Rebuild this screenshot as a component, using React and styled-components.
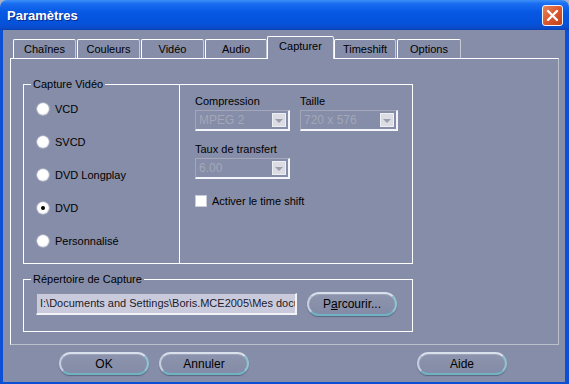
import React from "react";
import styled, { createGlobalStyle } from "styled-components";

const GlobalStyle = createGlobalStyle`
  html, body {
    margin: 0;
    padding: 0;
    background: #a9b1c6;
  }
  body {
    font-family: "Liberation Sans", Arial, sans-serif;
    font-size: 11px;
  }
`;

const BG = "#868da8";

const tabs = [
  { label: "Chaînes", w: 63 },
  { label: "Couleurs", w: 63 },
  { label: "Vidéo", w: 63 },
  { label: "Audio", w: 62 },
  { label: "Capturer", w: 67, active: true },
  { label: "Timeshift", w: 62 },
  { label: "Options", w: 64 },
];

const modes = ["VCD", "SVCD", "DVD Longplay", "DVD", "Personnalisé"];

const App = () => {
  return (
    <Window>
      <GlobalStyle />
      <TitleBar>
        <Title>Paramètres</Title>
        <CloseButton>
          <svg width="13" height="13" viewBox="0 0 13 13">
            <path d="M2 2 L11 11 M11 2 L2 11" stroke="#fff" strokeWidth="2.4" strokeLinecap="round" />
          </svg>
        </CloseButton>
      </TitleBar>
      <Frame>
        <TabRow>
          {tabs.map((t) => (
            <Tab key={t.label} $w={t.w} $active={t.active}>
              {t.label}
            </Tab>
          ))}
        </TabRow>
        <Panel>
          <Group>
            <GroupLabel>Capture Vidéo</GroupLabel>
            <CaptureBody>
              <RadioColumn>
                {modes.map((m) => (
                  <RadioRow key={m}>
                    <Radio $checked={m === "DVD"} />
                    {m}
                  </RadioRow>
                ))}
              </RadioColumn>
              <Settings>
                <FieldRow>
                  <Field $w={95}>
                    <Label>Compression</Label>
                    <Combo>
                      MPEG 2
                      <ComboArrow />
                    </Combo>
                  </Field>
                  <Field $w={98}>
                    <Label>Taille</Label>
                    <Combo>
                      720 x 576
                      <ComboArrow />
                    </Combo>
                  </Field>
                </FieldRow>
                <FieldRow $top={11}>
                  <Field $w={95}>
                    <Label>Taux de transfert</Label>
                    <Combo>
                      6.00
                      <ComboArrow />
                    </Combo>
                  </Field>
                </FieldRow>
                <CheckRow>
                  <CheckBox />
                  Activer le time shift
                </CheckRow>
              </Settings>
            </CaptureBody>
          </Group>
          <Group $top={15}>
            <GroupLabel>Répertoire de Capture</GroupLabel>
            <PathRow>
              <PathField>I:\Documents and Settings\Boris.MCE2005\Mes docu</PathField>
              <PillButton $w={90} $h={24}>
                P<Mnemonic>a</Mnemonic>rcourir...
              </PillButton>
            </PathRow>
          </Group>
        </Panel>
        <ButtonRow>
          <PillButton $w={90}>OK</PillButton>
          <PillButton $w={90}>Annuler</PillButton>
          <Spacer />
          <PillButton $w={90}>Aide</PillButton>
        </ButtonRow>
      </Frame>
    </Window>
  );
};

const Window = styled.div`
  width: 569px;
  height: 384px;
  display: flex;
  flex-direction: column;
  overflow: hidden;
`;

const TitleBar = styled.div`
  height: 30px;
  flex-shrink: 0;
  display: flex;
  align-items: center;
  justify-content: space-between;
  padding: 0 6px 0 7px;
  border-radius: 7px 7px 0 0;
  background: linear-gradient(
    to bottom,
    #3d8ff6 0%,
    #1a6ef0 12%,
    #0758e4 40%,
    #0553dc 75%,
    #0a4ccc 92%,
    #0841b4 100%
  );
`;

const Title = styled.span`
  color: #fff;
  font-weight: bold;
  font-size: 13px;
  text-shadow: 1px 1px 0 #0a2a8a;
  margin-top: 1px;
`;

const CloseButton = styled.div`
  width: 19px;
  height: 19px;
  border: 1px solid #f4f4f4;
  border-radius: 3px;
  display: flex;
  align-items: center;
  justify-content: center;
  background: linear-gradient(135deg, #e8845a 0%, #d9582e 50%, #c0401a 100%);
`;

const Frame = styled.div`
  flex: 1;
  display: flex;
  flex-direction: column;
  background: ${BG};
  border-left: 3px solid #0c4fd4;
  border-right: 4px solid #0c4fd4;
  border-bottom: 2px solid #0c4fd4;
`;

const TabRow = styled.div`
  display: flex;
  align-items: flex-end;
  gap: 1px;
  height: 22px;
  margin: 6px 0 0 10px;
  position: relative;
  z-index: 1;
`;

const Tab = styled.div`
  width: ${(p) => p.$w}px;
  height: ${(p) => (p.$active ? 23 : 19)}px;
  margin: ${(p) => (p.$active ? "0 -1px -1px -1px" : "0")};
  box-sizing: border-box;
  display: flex;
  align-items: center;
  justify-content: center;
  padding-bottom: ${(p) => (p.$active ? 4 : 0)}px;
  background: ${BG};
  color: #000;
  border-top: 1px solid #fff;
  border-left: 1px solid #fff;
  border-right: 1px solid ${(p) => (p.$active ? "#e4e6ee" : "#c7cad6")};
  border-radius: 2px 2px 0 0;
`;

const Panel = styled.div`
  width: 549px;
  height: 287px;
  box-sizing: border-box;
  margin-left: 7px;
  padding: 25px 0 0 12px;
  border-top: 1px solid #fff;
  border-left: 1px solid #fff;
  border-right: 1px solid #bcc0cc;
  border-bottom: 1px solid #bcc0cc;
`;

const Group = styled.div`
  position: relative;
  width: 390px;
  box-sizing: border-box;
  border: 1px solid #fff;
  margin-top: ${(p) => p.$top || 0}px;
`;

const GroupLabel = styled.span`
  position: absolute;
  top: -8px;
  left: 7px;
  padding: 0 2px;
  background: ${BG};
  color: #000;
  line-height: 14px;
`;

const CaptureBody = styled.div`
  display: flex;
  height: 178px;
`;

const RadioColumn = styled.div`
  width: 156px;
  box-sizing: border-box;
  border-right: 1px solid #fff;
  display: flex;
  flex-direction: column;
  gap: 13px;
  padding: 14px 0 0 13px;
`;

const RadioRow = styled.div`
  height: 20px;
  display: flex;
  align-items: center;
  gap: 6px;
  color: #000;
`;

const Radio = styled.span`
  width: 12px;
  height: 12px;
  border-radius: 50%;
  background: radial-gradient(circle at 45% 40%, #ffffff 55%, #e4e6ee 78%, #b8bdcc 100%);
  box-shadow: 0 0 1px 0.5px rgba(255, 255, 255, 0.6);
  display: flex;
  align-items: center;
  justify-content: center;
  &::after {
    content: "";
    width: 4px;
    height: 4px;
    border-radius: 50%;
    background: ${(p) => (p.$checked ? "#000" : "transparent")};
  }
`;

const Settings = styled.div`
  flex: 1;
  padding: 9px 0 0 15px;
  display: flex;
  flex-direction: column;
`;

const FieldRow = styled.div`
  display: flex;
  gap: 10px;
  margin-top: ${(p) => p.$top || 0}px;
`;

const Field = styled.div`
  width: ${(p) => p.$w}px;
  display: flex;
  flex-direction: column;
  gap: 2px;
`;

const Label = styled.span`
  line-height: 14px;
  color: #000;
`;

const Combo = styled.div`
  position: relative;
  height: 21px;
  box-sizing: border-box;
  display: flex;
  align-items: center;
  padding-left: 3px;
  font-size: 12px;
  color: #a3a7b8;
  border-top: 1px solid #a3a7b9;
  border-left: 1px solid #a3a7b9;
  border-right: 2px solid #f4f5f8;
  border-bottom: 2px solid #f4f5f8;
`;

const ComboArrow = styled.span`
  position: absolute;
  right: 2px;
  top: 2px;
  width: 14px;
  height: 14px;
  box-sizing: border-box;
  background: #dcdde4;
  border: 1px solid #eeeff3;
  display: flex;
  align-items: center;
  justify-content: center;
  &::after {
    content: "";
    border-left: 4px solid transparent;
    border-right: 4px solid transparent;
    border-top: 4px solid #9a9eae;
    margin-top: 1px;
  }
`;

const CheckRow = styled.div`
  display: flex;
  align-items: center;
  gap: 5px;
  margin-top: 16px;
  color: #000;
`;

const CheckBox = styled.span`
  width: 12px;
  height: 12px;
  box-sizing: border-box;
  background: #fff;
  border: 1px solid #c9ccd8;
`;

const PathRow = styled.div`
  display: flex;
  align-items: center;
  gap: 10px;
  height: 54px;
  padding: 0 0 0 12px;
  margin-top: -3px;
`;

const PathField = styled.div`
  width: 261px;
  height: 22px;
  box-sizing: border-box;
  background: #cacadd;
  color: #1b1b2b;
  padding: 0 3px;
  line-height: 19px;
  white-space: nowrap;
  overflow: hidden;
  border-top: 1px solid #8a8fa8;
  border-left: 1px solid #8a8fa8;
  border-right: 2px solid #f2f3f7;
  border-bottom: 2px solid #f2f3f7;
`;

const Mnemonic = styled.span`
  text-decoration: underline;
`;

const PillButton = styled.div`
  width: ${(p) => p.$w}px;
  height: ${(p) => p.$h || 23}px;
  box-sizing: border-box;
  display: flex;
  align-items: center;
  justify-content: center;
  font-size: 12px;
  color: #000;
  border-radius: 12px;
  border: 2px solid;
  border-color: #d9dfeb #8fc3cf #6fb2c2 #c3cfe0;
  background: linear-gradient(to bottom, #8d94ae, #848ba6);
  box-shadow: 0 1px 1px rgba(40, 50, 80, 0.45), inset 0 1px 0 rgba(255, 255, 255, 0.15);
`;

const ButtonRow = styled.div`
  display: flex;
  gap: 10px;
  margin-top: 7px;
  padding-left: 56px;
  padding-right: 58px;
`;

const Spacer = styled.div`
  flex: 1;
`;

export default App;
